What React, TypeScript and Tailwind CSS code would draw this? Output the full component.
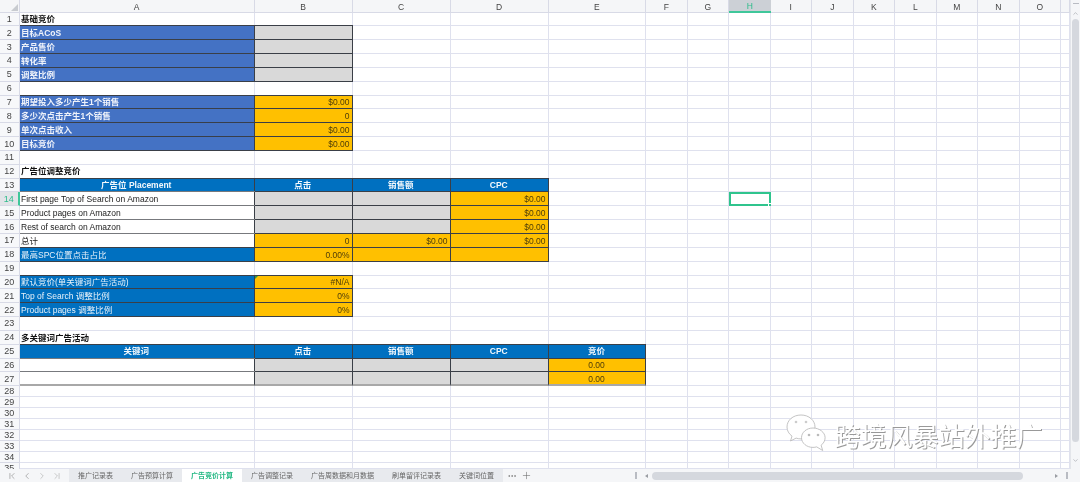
import { ChevronFirst, ChevronLast, ChevronLeft, ChevronRight, ChevronDown, ChevronUp, Ellipsis, Plus } from "lucide-react";

const columns = ["A", "B", "C", "D", "E", "F", "G", "H", "I", "J", "K", "L", "M", "N", "O", ""];

const sheetTabs = [
  "推广记录表",
  "广告预算计算",
  "广告竞价计算",
  "广告调整记录",
  "广告周数据和月数据",
  "刷单留评记录表",
  "关键词位置",
];

const frame = "border-r border-b border-[#3a3f47] shadow-[0_-1px_0_#3a3f47]";

const kinds: Record<string, string> = {
  plain: "border-r border-b border-[#dfe1ee] bg-white",
  title: "border-r border-b border-[#dfe1ee] bg-white font-bold text-[#111]",
  label: `${frame} bg-[#4472c4] font-bold text-[#eef2fa]`,
  blue: `${frame} bg-[#0070c0] text-[#e6f1f9]`,
  head: `${frame} bg-[#0070c0] font-bold text-[#f2f8fc] justify-center`,
  gray: `${frame} bg-[#d9d9d9]`,
  amber: `${frame} bg-[#ffc000] text-[#4d3c08] justify-end`,
  amberMid: `${frame} bg-[#ffc000] text-[#4d3c08] justify-center`,
  white: "border-r border-b border-r-[#3a3f47] border-b-[#77797d] shadow-[0_-1px_0_#77797d] bg-white text-[#222]",
};

type Cell = [string, string?];

// filled cells only, keyed by row number then column letter
const cells: Record<number, Record<string, Cell>> = {
  1: { A: ["title", "基础竞价"] },
  2: { A: ["label", "目标ACoS"], B: ["gray"] },
  3: { A: ["label", "产品售价"], B: ["gray"] },
  4: { A: ["label", "转化率"], B: ["gray"] },
  5: { A: ["label", "调整比例"], B: ["gray"] },
  7: { A: ["label", "期望投入多少产生1个销售"], B: ["amber", "$0.00"] },
  8: { A: ["label", "多少次点击产生1个销售"], B: ["amber", "0"] },
  9: { A: ["label", "单次点击收入"], B: ["amber", "$0.00"] },
  10: { A: ["label", "目标竞价"], B: ["amber", "$0.00"] },
  12: { A: ["title", "广告位调整竞价"] },
  13: { A: ["head", "广告位 Placement"], B: ["head", "点击"], C: ["head", "销售额"], D: ["head", "CPC"] },
  14: { A: ["white", "First page Top of Search on Amazon"], B: ["gray"], C: ["gray"], D: ["amber", "$0.00"] },
  15: { A: ["white", "Product pages on Amazon"], B: ["gray"], C: ["gray"], D: ["amber", "$0.00"] },
  16: { A: ["white", "Rest of search on Amazon"], B: ["gray"], C: ["gray"], D: ["amber", "$0.00"] },
  17: { A: ["white", "总计"], B: ["amber", "0"], C: ["amber", "$0.00"], D: ["amber", "$0.00"] },
  18: { A: ["blue", "最高SPC位置点击占比"], B: ["amber", "0.00%"], C: ["amber"], D: ["amber"] },
  20: { A: ["blue", "默认竞价(单关键词广告活动)"], B: ["amber", "#N/A"] },
  21: { A: ["blue", "Top of Search 调整比例"], B: ["amber", "0%"] },
  22: { A: ["blue", "Product pages 调整比例"], B: ["amber", "0%"] },
  24: { A: ["title", "多关键词广告活动"] },
  25: { A: ["head", "关键词"], B: ["head", "点击"], C: ["head", "销售额"], D: ["head", "CPC"], E: ["head", "竞价"] },
  26: { A: ["white"], B: ["gray"], C: ["gray"], D: ["gray"], E: ["amberMid", "0.00"] },
  27: { A: ["white"], B: ["gray"], C: ["gray"], D: ["gray"], E: ["amberMid", "0.00"] },
};

const rowNumbers = Array.from({ length: 35 }, (_, i) => i + 1);

function WeChatMark() {
  return (
    <svg width="42" height="40" viewBox="0 0 42 40" fill="#fff" stroke="#b5b5b5" strokeWidth="0.8">
      <path d="M15 1C7 1 1 6.200 1 13c0 3.700 1.900 6.900 5 9.100L4.500 27l5.600-2.900c1.600.5 3.200.8 4.900.8 8 0 14-5.300 14-11.900S23 1 15 1z" />
      <path d="M27 14c-6.300 0-11.500 4.300-11.500 9.700S20.700 33.400 27 33.400c1.300 0 2.500-.2 3.700-.5l6 3.600-1.600-5.300c2.500-1.800 4-4.500 4-7.500C39.100 18.300 33.300 14 27 14z" />
      <circle cx="10" cy="8" r="1.300" fill="#ccc" stroke="none" />
      <circle cx="20" cy="8" r="1.300" fill="#ccc" stroke="none" />
      <circle cx="23" cy="21" r="1.300" fill="#bbb" stroke="none" />
      <circle cx="32" cy="21" r="1.300" fill="#bbb" stroke="none" />
    </svg>
  );
}

export default function App() {
  return (
    <div className="w-[1080px] h-[482px] overflow-hidden bg-white flex flex-col font-['Liberation_Sans','Noto_Sans_CJK_SC',sans-serif] blur-[0.35px]">
      <div className="flex h-[469px]">
        <div className="relative w-[1070px] h-[469px] overflow-hidden">
          <div className="grid grid-cols-[19.5px_235px_98px_98px_98px_97.5px_41.5px_41.5px_41.5px_41.5px_41.5px_41.5px_41.5px_41.5px_41.5px_41.5px_9px] grid-rows-[12.5px_repeat(27,13.85px)_repeat(7,11px)_6px] text-[8.5px] leading-none">
            <div className="bg-[#f5f6f8] border-r border-b border-[#d8dae6] flex items-end justify-end">
              <span className="mr-[1px] mb-[1px] w-0 h-0 border-l-[7px] border-b-[7px] border-l-transparent border-b-[#c8cbd0]"></span>
            </div>
            {columns.map((col, i) => (
              <div
                key={i}
                className={
                  col === "H"
                    ? "bg-[#ccd0d6] border-b-2 border-[#3fc79a] text-[#2dbb8b] flex items-center justify-center pt-[1px]"
                    : "bg-[#f5f6f8] border-r border-b border-[#d8dae6] text-[#444] flex items-center justify-center pt-[2px]"
                }
              >
                {col}
              </div>
            ))}

            {rowNumbers.map((row) => (
              <div key={row} className="contents">
                <div
                  className={
                    row === 14
                      ? "bg-[#e2e4e8] border-r-2 border-b border-r-[#3fc79a] border-b-[#d8dae6] text-[9px] text-[#2dbb8b] flex items-center justify-center pt-[1px]"
                      : row === 35
                        ? "bg-[#f7f8fa] border-r border-[#d8dae6] text-[9px] text-[#444] flex items-start justify-center pt-[1px]"
                        : "bg-[#f7f8fa] border-r border-b border-[#d8dae6] text-[9px] text-[#444] flex items-center justify-center pt-[1px]"
                  }
                >
                  {row}
                </div>
                {columns.map((col, i) => {
                  const [kind, text] = cells[row]?.[col] ?? ["plain"];
                  if (row === 14 && col === "H") {
                    return (
                      <div key={i} className="relative border-2 border-[#2fc48d] bg-white">
                        <span className="absolute -right-[2px] -bottom-[2px] w-[3px] h-[3px] bg-[#2fc48d] border-l border-t border-white"></span>
                      </div>
                    );
                  }
                  const lastRow = row === 27 && kind !== "plain" ? "border-b-2 border-b-[#a8a8a8]" : "";
                  return (
                    <div key={i} className={`relative flex items-center whitespace-nowrap pl-[1.5px] pr-[2px] pt-[1px] ${kinds[kind]} ${lastRow}`}>
                      {text}
                      {row === 20 && col === "B" && (
                        <span className="absolute left-0 top-0 w-0 h-0 border-t-[3px] border-r-[3px] border-t-[#2a9a4a] border-r-transparent"></span>
                      )}
                    </div>
                  );
                })}
              </div>
            ))}
          </div>

          {/* watermark over the sheet */}
          <div className="absolute left-[786px] top-[414px] flex items-center gap-[6.5px]">
            <WeChatMark />
            <span className="text-[26px] leading-none mt-[1px] whitespace-nowrap text-white font-['Noto_Sans_CJK_SC',sans-serif] [text-shadow:1px_1px_0.5px_#999]">
              跨境风暴站外推广
            </span>
          </div>
        </div>

        <div className="w-[10px] bg-[#f5f6f8] border-l border-[#e3e5ea] flex flex-col items-center">
          <div className="mt-[3px] w-[6px] h-px bg-[#b9bcc3]"></div>
          <ChevronUp size={7} strokeWidth={2} className="mt-[6px] text-[#9a9da3]" />
          <div className="mt-[2px] w-[7px] h-[423px] rounded-full bg-[#d5d8de]"></div>
          <ChevronDown size={7} strokeWidth={2} className="mt-[15px] text-[#9a9da3]" />
        </div>
      </div>

      <div className="h-[13px] flex items-center bg-[#f5f6f8] text-[7px] leading-none text-[#666]">
        <div className="w-[69px] flex items-center pl-[7px] gap-[5px] text-[#777]">
          <ChevronFirst size={10} strokeWidth={1.3} />
          <ChevronLeft size={10} strokeWidth={1.3} />
          <ChevronRight size={10} strokeWidth={1.3} className="text-[#a0a0a0]" />
          <ChevronLast size={10} strokeWidth={1.3} className="text-[#a0a0a0]" />
        </div>
        <div className="flex h-full bg-[#e8eaee]">
          {sheetTabs.map((tab) => (
            <div
              key={tab}
              className={
                tab === "广告竞价计算"
                  ? "px-[9px] flex items-center bg-white font-bold text-[#22b883]"
                  : "px-[9px] flex items-center"
              }
            >
              {tab}
            </div>
          ))}
        </div>
        <Ellipsis size={10} strokeWidth={1.5} className="ml-[4px] text-[#666]" />
        <Plus size={11} strokeWidth={1.2} className="ml-[4px] text-[#666]" />
        <div className="ml-[103px] w-[2px] h-[7px] bg-[#b9bcc3]"></div>
        <div className="ml-[8px] w-0 h-0 border-y-[2px] border-r-[3px] border-y-transparent border-r-[#9a9da3]"></div>
        <div className="ml-[4px] w-[371px] h-[8px] rounded-full bg-[#d5d8de]"></div>
        <div className="ml-[32px] w-0 h-0 border-y-[2px] border-l-[3px] border-y-transparent border-l-[#9a9da3]"></div>
        <div className="ml-[8px] w-[2px] h-[7px] bg-[#b9bcc3]"></div>
      </div>
    </div>
  );
}
